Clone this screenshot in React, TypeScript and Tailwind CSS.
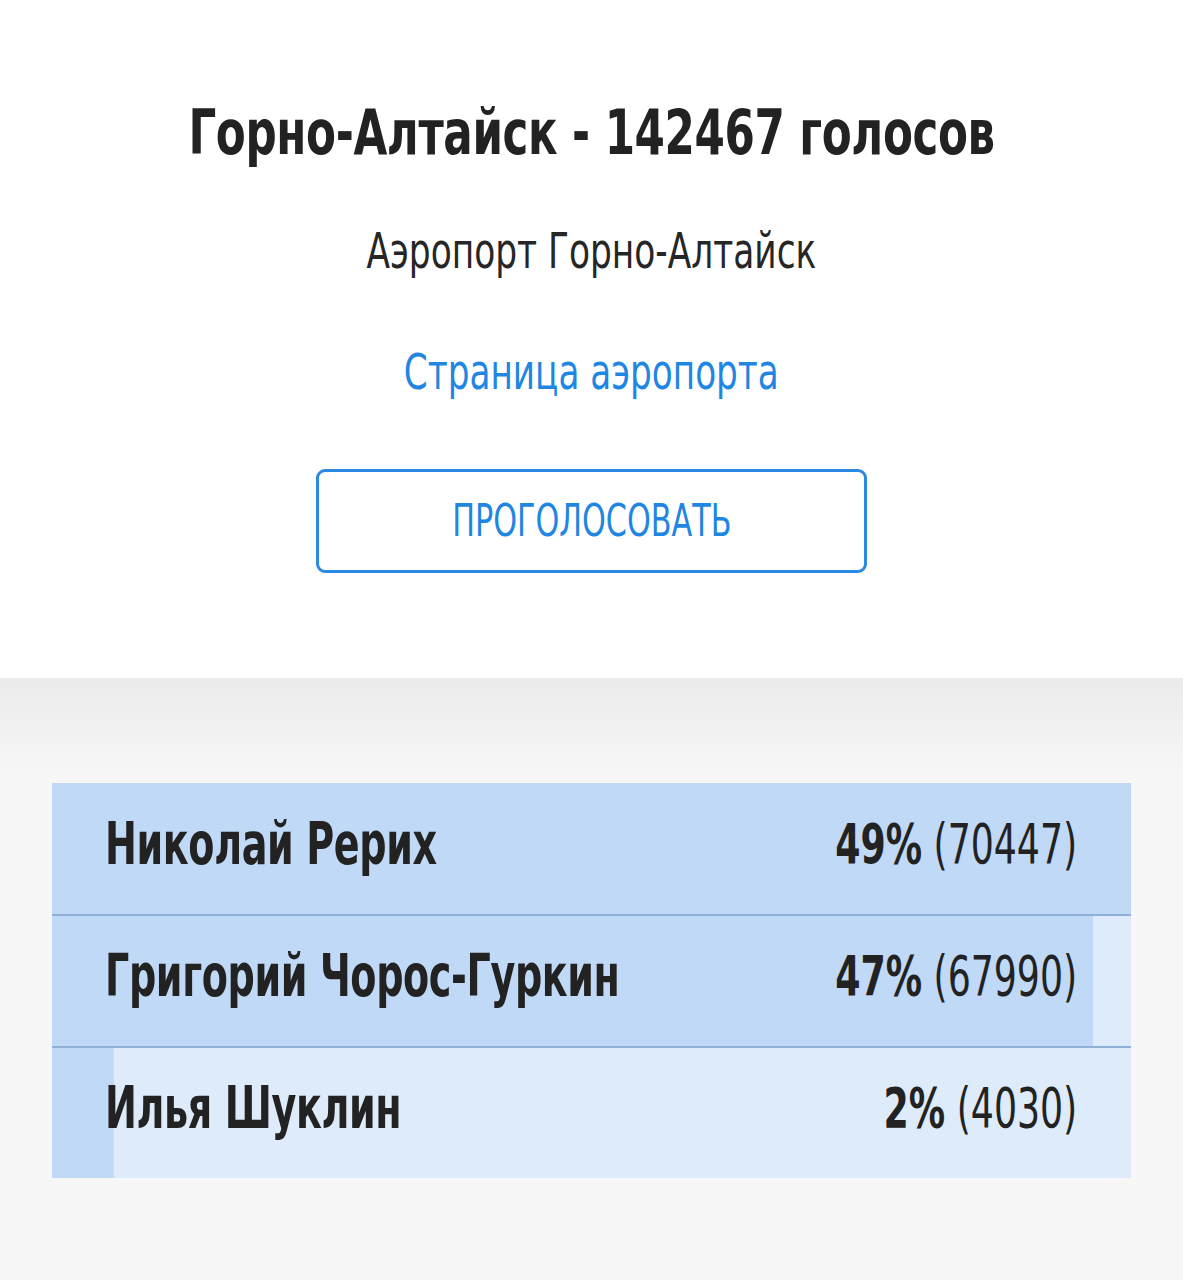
import React from "react";

interface Candidate {
  name: string;
  percent: number;
  votes: number;
}

const candidates: Candidate[] = [
  { name: "Николай Рерих", percent: 49, votes: 70447 },
  { name: "Григорий Чорос-Гуркин", percent: 47, votes: 67990 },
  { name: "Илья Шуклин", percent: 2, votes: 4030 },
];

// narrow look: condensed DejaVu squeezed a bit more
const font = { fontFamily: '"DejaVu Sans Condensed", "DejaVu Sans", sans-serif', fontStretch: "condensed" };

const App = () => {
  const max = Math.max(...candidates.map((c) => c.votes));

  return (
    <div className="min-h-[1280px] bg-[#f7f7f7] text-[#222]" style={font}>
      {/* Header */}
      <section className="bg-white flex flex-col items-center pt-[93px] pb-[105px]">
        <h1 className="whitespace-nowrap scale-x-[0.77] text-[63px] leading-[80px] font-bold tracking-[-0.5px]">
          Горно-Алтайск - 142467 голосов
        </h1>
        <p className="mt-[47px] whitespace-nowrap scale-x-[0.78] text-[49px] leading-[64px] text-[#262626]">
          Аэропорт Горно-Алтайск
        </p>
        <a href="#" className="mt-[57px] whitespace-nowrap scale-x-[0.777] text-[49px] leading-[64px] text-[#1f86e2]">
          Страница аэропорта
        </a>
        <button className="mt-[64px] w-[551px] h-[104px] flex items-center justify-center border-[3px] border-[#2a8ae3] rounded-[9px] bg-white">
          <span className="inline-block whitespace-nowrap scale-x-[0.747] text-[45px] leading-[56px] text-[#1f86e2]">ПРОГОЛОСОВАТЬ</span>
        </button>
      </section>

      {/* Results */}
      <section className="bg-gradient-to-b from-[#ebebeb] to-[#f7f7f7] bg-no-repeat bg-[length:100%_100px] pt-[105px] px-[52px] pb-[103px]">
        <div className="flex flex-col">
          {candidates.map((c, i) => (
            <div
              key={c.name}
              className={`relative bg-[#deebfa] ${i > 0 ? "h-[132px] border-t-2 border-[#8fb0d7]" : "h-[131px]"}`}
            >
              <div className="absolute inset-y-0 left-0 bg-[#c0d9f7]" style={{ width: `${(c.votes / max) * 100}%` }} />
              <div className="relative h-full flex items-center justify-between pl-[53px] pr-[54px] pb-[10px]">
                <span className="min-w-0 whitespace-nowrap origin-left scale-x-[0.73] text-[58px] leading-[70px] font-bold tracking-[-0.5px]">
                  {c.name}
                </span>
                <span className="shrink-0 whitespace-nowrap origin-right scale-x-[0.733] text-[55px] leading-[70px]">
                  <b className="font-bold">{c.percent}%</b> ({c.votes})
                </span>
              </div>
            </div>
          ))}
        </div>
      </section>
    </div>
  );
};

export default App;
